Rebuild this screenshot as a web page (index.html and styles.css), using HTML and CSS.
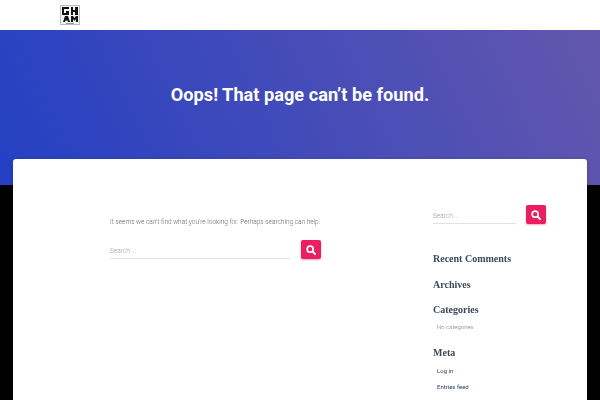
FILE: index.html
```html
<!DOCTYPE html>
<html>
<head>
  <title>Page not found</title>
  <link rel="stylesheet" href="styles.css">
</head>
<body>
  <!-- Top bar -->
  <header class="topbar">
    <svg class="logo" width="20" height="20" viewBox="0 0 20 20" aria-label="Logo">
      <rect width="20" height="20" fill="#bdbdbd"/>
      <rect x="1" y="1" width="18" height="18" fill="#f4f4f4"/>
      <path d="M2 2h7v2H4v4h2V6h3v4H2zM11 2h2v3h2V2h3v8h-3V7h-2v3h-2z" fill="#111"/>
      <path d="M3 17l2-6h3l2 6H8l-.5-1.500h-2L5 17zM11 17v-6h2l1.500 2 1.500-2h2v6h-2v-3l-1.500 2-1.500-2v3z" fill="#111"/>
      <rect x="6" y="18" width="8" height="1" fill="#999"/>
    </svg>
  </header>

  <!-- Hero -->
  <section class="hero">
    <h1>Oops! That page can’t be found.</h1>
  </section>

  <!-- Card -->
  <main class="card">
    <div class="content">
      <p class="notice">It seems we can’t find what you’re looking for. Perhaps searching can help.</p>
      <form class="search search-main">
        <input type="text" placeholder="Search ...">
        <button type="button" aria-label="Search">
          <svg width="10" height="10" viewBox="0 0 12 12"><circle cx="5" cy="5" r="3.600" fill="none" stroke="#fff" stroke-width="2"/><path d="M7.800 7.800L11 11" stroke="#fff" stroke-width="2.200" stroke-linecap="round"/></svg>
        </button>
      </form>
    </div>
    <aside class="sidebar">
      <form class="search search-side">
        <input type="text" placeholder="Search ...">
        <button type="button" aria-label="Search">
          <svg width="10" height="10" viewBox="0 0 12 12"><circle cx="5" cy="5" r="3.600" fill="none" stroke="#fff" stroke-width="2"/><path d="M7.800 7.800L11 11" stroke="#fff" stroke-width="2.200" stroke-linecap="round"/></svg>
        </button>
      </form>
      <h4 class="first">Recent Comments</h4>
      <h4>Archives</h4>
      <h4>Categories</h4>
      <ul>
        <li class="empty">No categories</li>
      </ul>
      <h4>Meta</h4>
      <ul>
        <li><a href="#">Log in</a></li>
        <li><a href="#">Entries feed</a></li>
      </ul>
    </aside>
  </main>
</body>
</html>
```

FILE: styles.css
```css
html {
  background: #000;
}
body {
  margin: 0;
  height: 400px;
  overflow: hidden;
  background: #000;
  font-family: Roboto, sans-serif;
}
.topbar {
  height: 30px;
  padding-left: 60px;
  background: #fff;
  display: flex;
  align-items: center;
}
.logo {
  display: block;
}
.hero {
  height: 155px;
  background: linear-gradient(65deg, #2440c4 0%, #6357ad 100%);
  color: #fff;
  text-align: center;
}
.hero h1 {
  margin: 0;
  padding-top: 52px;
  font-size: 18.200px;
  line-height: 26px;
  font-weight: 700;
}
.card {
  position: relative;
  height: 260px;
  margin: -26px 13px 0;
  padding: 46px 41px 0 97px;
  box-sizing: border-box;
  overflow: hidden;
  display: flex;
  justify-content: space-between;
  background: #fff;
  border-radius: 3px;
  box-shadow: 0 1px 4px rgba(0, 0, 0, 0.2);
}
.content {
  width: 211px;
  padding-top: 11px;
}
.notice {
  margin: 0 0 13px;
  padding-top: 1px;
  font-size: 6.500px;
  line-height: 10px;
  font-weight: 300;
  color: #666;
  white-space: nowrap;
  will-change: opacity;
}
.search {
  display: flex;
  align-items: flex-start;
  justify-content: space-between;
}
.search input {
  box-sizing: border-box;
  height: 19px;
  padding: 4px 0 0;
  border: 0;
  border-bottom: 1px solid #e2e2e2;
  outline: 0;
  background: transparent;
  font-family: Roboto, sans-serif;
  font-size: 6.500px;
  font-weight: 300;
  will-change: opacity;
}
.search input::placeholder {
  color: #999;
  opacity: 1;
}
.search-main input {
  width: 180px;
}
.search-side input {
  width: 83px;
}
.search button {
  width: 20px;
  height: 19px;
  padding: 0;
  border: 0;
  border-radius: 2px;
  background: #e91e63;
  display: flex;
  align-items: center;
  justify-content: center;
  box-shadow: 0 1px 2px rgba(233, 30, 99, 0.4);
}
.sidebar {
  width: 113px;
}
.sidebar h4 {
  margin: 0;
  padding-top: 14.500px;
  font-family: "Liberation Serif", serif;
  font-size: 10px;
  line-height: 11px;
  font-weight: 700;
  color: #3c4858;
  will-change: opacity;
}
.sidebar h4.first {
  padding-top: 29px;
}
.sidebar ul {
  margin: 0;
  padding: 8px 0 0 4px;
  list-style: none;
  font-size: 6px;
  line-height: 10px;
  will-change: opacity;
}
.sidebar li {
  margin-bottom: 6px;
}
.sidebar li.empty {
  margin: -1px 0 0;
  color: #777;
  font-weight: 300;
}
.sidebar a {
  color: #2c3e60;
  text-decoration: none;
}
```
